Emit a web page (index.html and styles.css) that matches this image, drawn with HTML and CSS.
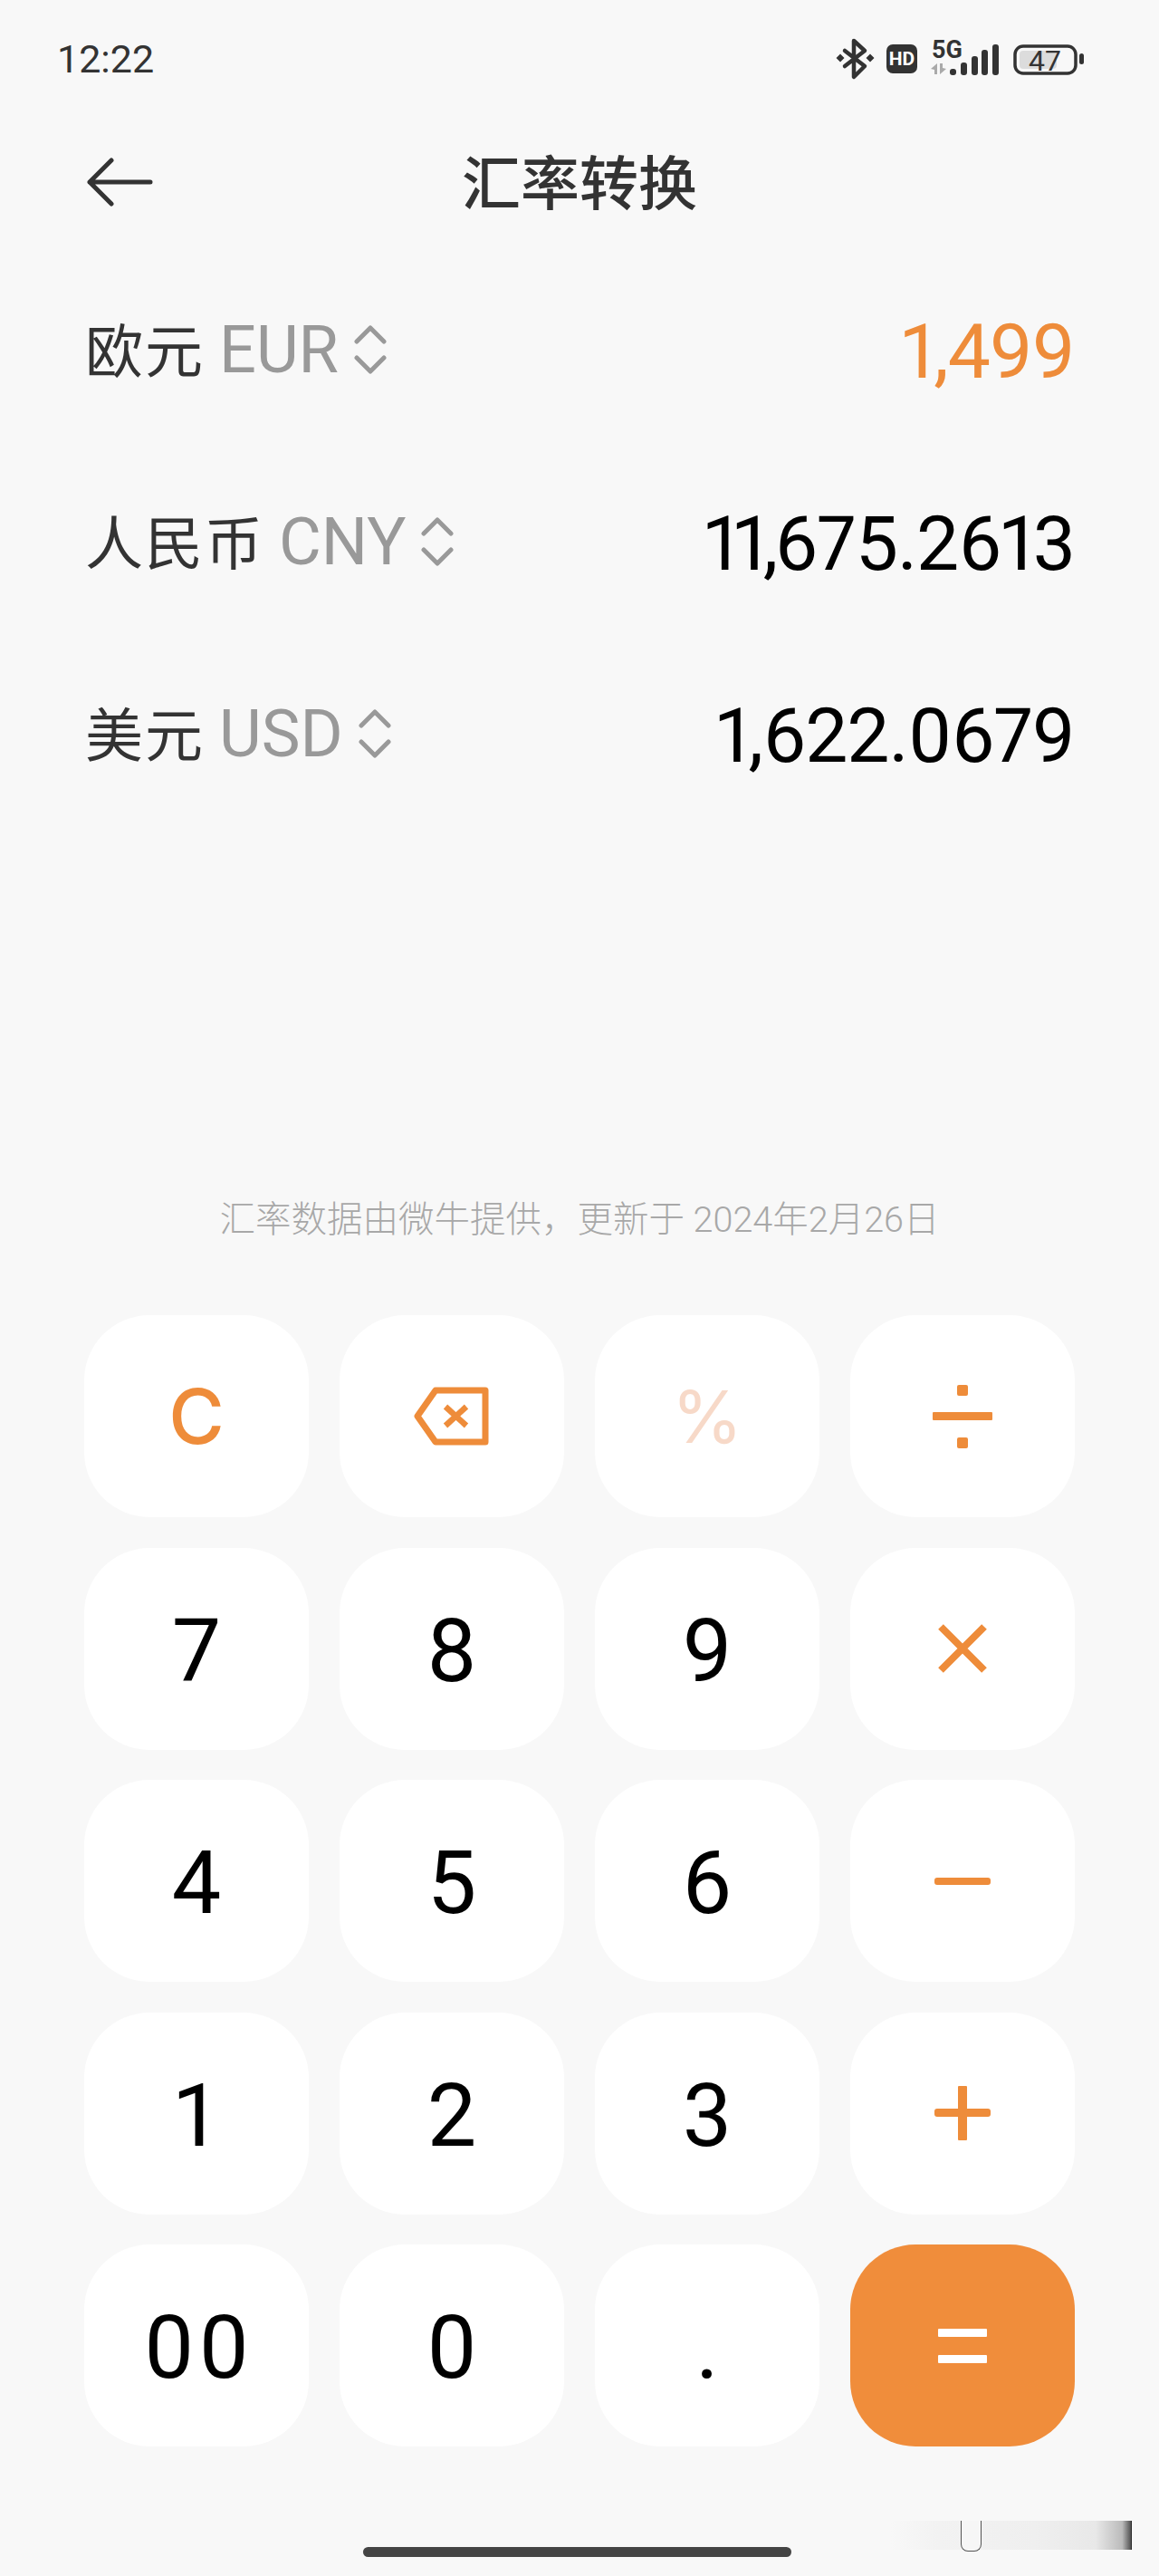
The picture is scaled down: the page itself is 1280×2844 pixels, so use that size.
FILE: index.html
```html
<!DOCTYPE html>
<html lang="zh-CN">
<head>
<meta charset="utf-8">
<title>汇率转换</title>
<link rel="stylesheet" href="styles.css">
</head>
<body>
<main class="screen">
  <header class="status">
    <span class="time">12:22</span>
    <svg class="status-icons" viewBox="920 35 280 60" width="280" height="60">
      <g fill="none" stroke="#333" stroke-width="4.5" stroke-linejoin="round" stroke-linecap="round">
        <path d="M933 56 L955 73 L943 85 V45 L955 56 L933 73"/>
      </g>
      <path fill="#333" d="M928 59.5 L932.5 64 L928 68.5 L923.5 64Z M961 59.5 L965.500 64 L961 68.5 L956.500 64Z"/>
      <rect x="979" y="49" width="34" height="32" rx="7" fill="#333"/>
      <text x="996" y="72" class="hd">HD</text>
      <text x="1046" y="64" class="fiveg">5G</text>
      <path fill="#aaa" d="M1028 76 L1035 70 V82 H1032 V77Z M1038 70 H1041 V75 L1045 76 L1038 82Z"/>
      <g fill="#333">
        <rect x="1049" y="76" width="7" height="7" rx="3"/>
        <rect x="1061" y="69" width="7" height="14" rx="3"/>
        <rect x="1073" y="62" width="7" height="21" rx="3"/>
        <rect x="1084" y="55" width="7" height="28" rx="3"/>
        <rect x="1096" y="49" width="7" height="34" rx="3"/>
      </g>
      <rect x="1121" y="51" width="67" height="30" rx="9" fill="none" stroke="#333" stroke-width="3.500"/>
      <rect x="1126" y="56" width="41" height="20" rx="4" fill="#dcdcdc"/>
      <text x="1154" y="78" class="batt">47</text>
      <rect x="1192" y="59" width="5" height="12" rx="2.500" fill="#333"/>
    </svg>
  </header>

  <div class="titlebar">
    <svg class="back" viewBox="0 0 76 54" width="76" height="54">
      <path d="M3 27 H70 M27 3 L3 27 L27 51" fill="none" stroke="#333" stroke-width="5" stroke-linecap="round" stroke-linejoin="round"/>
    </svg>
    <h1 class="title">汇率转换</h1>
  </div>

  <section class="rates">
    <div class="rate">
      <div class="cur"><span class="cur-name">欧元</span><span class="cur-code">EUR</span>
        <svg class="updown" viewBox="0 0 36 54" width="36" height="54"><path d="M3 18 L18 3 L33 18 M3 36 L18 51 L33 36"/></svg></div>
      <div class="amount active">1,499</div>
    </div>
    <div class="rate">
      <div class="cur"><span class="cur-name">人民币</span><span class="cur-code">CNY</span>
        <svg class="updown" viewBox="0 0 36 54" width="36" height="54"><path d="M3 18 L18 3 L33 18 M3 36 L18 51 L33 36"/></svg></div>
      <div class="amount"><span class="tight">11,</span>675.2613</div>
    </div>
    <div class="rate">
      <div class="cur"><span class="cur-name">美元</span><span class="cur-code">USD</span>
        <svg class="updown" viewBox="0 0 36 54" width="36" height="54"><path d="M3 18 L18 3 L33 18 M3 36 L18 51 L33 36"/></svg></div>
      <div class="amount">1,622.0679</div>
    </div>
  </section>

  <p class="note">汇率数据由微牛提供，更新于 2024年2月26日</p>

  <section class="keypad">
    <button class="key op clear">C</button>
    <button class="key">
      <svg viewBox="0 0 86 66" width="86" height="66"><path class="ostroke" d="M25 4 H80 V61 H25 L5 32.500Z"/><path class="ostroke thin" d="M36 22 L59 43 M59 22 L36 43"/></svg>
    </button>
    <button class="key percent">%</button>
    <button class="key">
      <svg viewBox="0 0 66 70" width="66" height="70"><g fill="#ee8c3a"><rect x="27" y="0" width="12" height="12" rx="2"/><rect x="0" y="30" width="66" height="9" rx="1"/><rect x="27" y="58" width="12" height="12" rx="2"/></g></svg>
    </button>

    <button class="key num">7</button>
    <button class="key num">8</button>
    <button class="key num">9</button>
    <button class="key">
      <svg viewBox="0 0 54 54" width="54" height="54"><path class="ostroke heavy" d="M3 3 L51 51 M51 3 L3 51"/></svg>
    </button>

    <button class="key num">4</button>
    <button class="key num">5</button>
    <button class="key num">6</button>
    <button class="key">
      <svg viewBox="0 0 62 8" width="62" height="8"><rect width="62" height="8" rx="3" fill="#ee8c3a"/></svg>
    </button>

    <button class="key num">1</button>
    <button class="key num">2</button>
    <button class="key num">3</button>
    <button class="key">
      <svg viewBox="0 0 62 60" width="62" height="60"><g fill="#ee8c3a"><rect y="25" width="62" height="9" rx="3"/><rect x="26" width="10" height="60" rx="1"/></g></svg>
    </button>

    <button class="key num zeros">00</button>
    <button class="key num">0</button>
    <button class="key num">.</button>
    <button class="key equals">
      <svg viewBox="0 0 54 38" width="54" height="38"><g fill="#fff"><rect width="54" height="9" rx="1"/><rect y="29" width="54" height="9" rx="1"/></g></svg>
    </button>
  </section>

  <div class="homebar"></div>
  <div class="smudge"><span class="smudge-u"></span></div>
</main>
</body>
</html>
```
FILE: styles.css
```css
* { box-sizing: border-box; }
html, body { margin: 0; padding: 0; background: #f8f8f8; }
body { font-family: Roboto, "Noto Sans CJK SC", sans-serif; }

.screen {
  position: relative;
  width: 1280px;
  height: 2844px;
  overflow: hidden;
  background: #f8f8f8;
  color: #333;
}

.status {
  height: 130px;
  padding: 0 80px 0 63px;
  display: flex;
  align-items: center;
  justify-content: space-between;
}
.time { font-size: 43px; color: #333; line-height: 1; }
.status-icons { display: block; }
.hd { font: 700 21px Roboto, sans-serif; fill: #fff; text-anchor: middle; }
.fiveg { font: 700 27px Roboto, sans-serif; fill: #333; text-anchor: middle; }
.batt { font: 400 32px Roboto, sans-serif; fill: #333; text-anchor: middle; }

.titlebar {
  position: relative;
  height: 142px;
  display: flex;
  align-items: center;
  justify-content: center;
}
.back { position: absolute; left: 96px; top: 44px; }
.title {
  margin: 6px 0 0;
  font-size: 65px;
  font-weight: 500;
  line-height: 1;
  color: #333;
}

.rates { margin-top: 8px; padding: 0 93px 0 94px; }
.rate {
  height: 212px;
  display: flex;
  align-items: center;
  justify-content: space-between;
}
.cur { display: flex; align-items: center; }
.cur-name { font-size: 64px; letter-spacing: 2px; color: #333; margin-bottom: 6px; }
.cur-code { font-size: 72px; color: #999; margin-left: 16px; }
.updown { margin-left: 17px; }
.updown path {
  fill: none;
  stroke: #999;
  stroke-width: 5;
  stroke-linecap: round;
  stroke-linejoin: round;
}
.amount {
  padding-top: 5px;
  font-size: 84px;
  line-height: 1;
  letter-spacing: -1px;
  color: #000;
  font-variant-numeric: proportional-nums;
}
.amount .tight { letter-spacing: -4px; }
.amount.active { color: #ee8c3a; }

.note {
  margin: 401px 0 0;
  height: 60px;
  line-height: 60px;
  text-align: center;
  font-size: 39.500px;
  font-weight: 300;
  color: #a8a8a8;
}

.keypad {
  margin: 75px 93px 0;
  display: grid;
  grid-template-columns: repeat(4, 1fr);
  grid-auto-rows: 223px;
  gap: 33.500px 34px;
}
.key {
  display: flex;
  align-items: center;
  justify-content: center;
  padding: 0;
  border: 0;
  border-radius: 72px;
  background: #fff;
  font-family: Roboto, sans-serif;
}
.key svg { display: block; }
.num { padding-top: 5px; font-size: 97px; color: #000; font-weight: 400; }
.zeros { padding-left: 6px; letter-spacing: 6px; }
.clear { font-family: Inter, sans-serif; font-size: 84px; font-weight: 500; color: #ee8c3a; }
.percent { font-family: Inter, sans-serif; font-size: 80px; color: #f7d9c8; }
.ostroke {
  fill: none;
  stroke: #ee8c3a;
  stroke-width: 7;
  stroke-linejoin: round;
}
.ostroke.thin { stroke-width: 6.500; }
.ostroke.heavy { stroke-width: 8; }
.equals { background: #f08d3b; }

.homebar {
  margin: 111px 0 0 401px;
  width: 473px;
  height: 11px;
  border-radius: 6px;
  background: #444;
}

.smudge {
  position: absolute;
  left: 983px;
  top: 2783px;
  width: 267px;
  height: 32px;
  background: linear-gradient(90deg, #f8f8f8 0%, #f2f2f2 20%, #efefef 60%, #e8e8e8 85%, #bbb 96%, #555 99.500%, #111 100%);
}
.smudge-u {
  position: absolute;
  left: 78px;
  top: 0;
  width: 23px;
  height: 34px;
  border: 1.500px solid #555;
  border-top: 0;
  border-radius: 0 0 8px 8px;
  background: #f6f6f6;
}
```
